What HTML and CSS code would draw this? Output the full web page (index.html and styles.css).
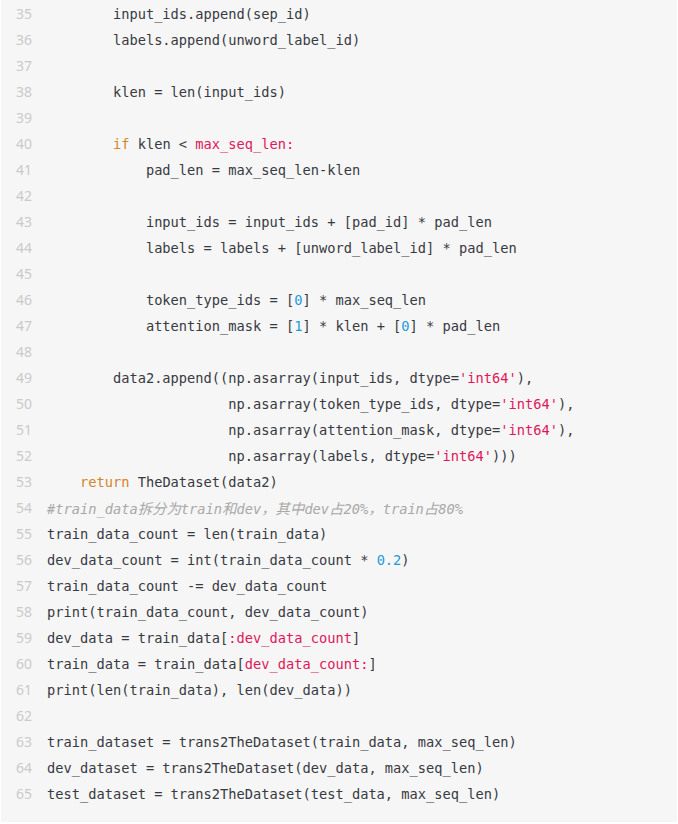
FILE: index.html
```html
<!DOCTYPE html>
<html lang="zh">
<head>
<meta charset="utf-8">
<link rel="stylesheet" href="styles.css">
</head>
<body>
<div class="code">
<div class="ln"><span class="no">35</span><span class="src">        input_ids.append(sep_id)</span></div>
<div class="ln"><span class="no">36</span><span class="src">        labels.append(unword_label_id)</span></div>
<div class="ln"><span class="no">37</span><span class="src"></span></div>
<div class="ln"><span class="no">38</span><span class="src">        klen = len(input_ids)</span></div>
<div class="ln"><span class="no">39</span><span class="src"></span></div>
<div class="ln"><span class="no">40</span><span class="src">        <span class="kw">if</span> klen &lt; <span class="st">max_seq_len:</span></span></div>
<div class="ln"><span class="no">41</span><span class="src">            pad_len = max_seq_len-klen</span></div>
<div class="ln"><span class="no">42</span><span class="src"></span></div>
<div class="ln"><span class="no">43</span><span class="src">            input_ids = input_ids + [pad_id] * pad_len</span></div>
<div class="ln"><span class="no">44</span><span class="src">            labels = labels + [unword_label_id] * pad_len</span></div>
<div class="ln"><span class="no">45</span><span class="src"></span></div>
<div class="ln"><span class="no">46</span><span class="src">            token_type_ids = [<span class="nm">0</span>] * max_seq_len</span></div>
<div class="ln"><span class="no">47</span><span class="src">            attention_mask = [<span class="nm">1</span>] * klen + [<span class="nm">0</span>] * pad_len</span></div>
<div class="ln"><span class="no">48</span><span class="src"></span></div>
<div class="ln"><span class="no">49</span><span class="src">        data2.append((np.asarray(input_ids, dtype=<span class="st">'int64'</span>),</span></div>
<div class="ln"><span class="no">50</span><span class="src">                      np.asarray(token_type_ids, dtype=<span class="st">'int64'</span>),</span></div>
<div class="ln"><span class="no">51</span><span class="src">                      np.asarray(attention_mask, dtype=<span class="st">'int64'</span>),</span></div>
<div class="ln"><span class="no">52</span><span class="src">                      np.asarray(labels, dtype=<span class="st">'int64'</span>)))</span></div>
<div class="ln"><span class="no">53</span><span class="src">    <span class="kw">return</span> TheDataset(data2)</span></div>
<div class="ln"><span class="no">54</span><span class="src"><span class="cm">#train_data<span class="cjk">拆分为</span>train<span class="cjk">和</span>dev<span class="cjk">，其中</span>dev<span class="cjk">占</span>20%<span class="cjk">，</span>train<span class="cjk">占</span>80%</span></span></div>
<div class="ln"><span class="no">55</span><span class="src">train_data_count = len(train_data)</span></div>
<div class="ln"><span class="no">56</span><span class="src">dev_data_count = int(train_data_count * <span class="nm">0.2</span>)</span></div>
<div class="ln"><span class="no">57</span><span class="src">train_data_count -= dev_data_count</span></div>
<div class="ln"><span class="no">58</span><span class="src">print(train_data_count, dev_data_count)</span></div>
<div class="ln"><span class="no">59</span><span class="src">dev_data = train_data[<span class="st">:dev_data_count</span>]</span></div>
<div class="ln"><span class="no">60</span><span class="src">train_data = train_data[<span class="st">dev_data_count:</span>]</span></div>
<div class="ln"><span class="no">61</span><span class="src">print(len(train_data), len(dev_data))</span></div>
<div class="ln"><span class="no">62</span><span class="src"></span></div>
<div class="ln"><span class="no">63</span><span class="src">train_dataset = trans2TheDataset(train_data, max_seq_len)</span></div>
<div class="ln"><span class="no">64</span><span class="src">dev_dataset = trans2TheDataset(dev_data, max_seq_len)</span></div>
<div class="ln"><span class="no">65</span><span class="src">test_dataset = trans2TheDataset(test_data, max_seq_len)</span></div>
</div>
</body>
</html>
```
FILE: styles.css
```css
html, body {
  margin: 0;
  padding: 0;
  background: #ffffff;
}

.code {
  width: 676px;
  margin-left: 1px;
  height: 822px;
  box-sizing: border-box;
  padding: 1px 0 15px 0;
  background: #f6f6f6;
  display: flex;
  flex-direction: column;
}

.ln {
  display: flex;
  height: 26px;
  line-height: 26px;
  align-items: center;
}

.no {
  width: 32px;
  flex: none;
  text-align: right;
  font-family: "Noto Sans", "Open Sans", sans-serif;
  font-size: 14px;
  color: #cacaca;
  box-sizing: border-box;
  padding-right: 1px;
}

.src {
  margin-left: 14px;
  white-space: pre;
  font-family: "DejaVu Sans Mono", "Noto Sans CJK SC", monospace;
  font-size: 13.7px;
  color: #383a42;
}

.kw { color: #d58428; }
.st { color: #e0175a; }
.nm { color: #1d9bdb; }
.cm { color: #a8a8a8; font-style: italic; }
.cjk {
  font-family: "Noto Sans CJK SC", sans-serif;
  font-size: 14.4px;
}
```
